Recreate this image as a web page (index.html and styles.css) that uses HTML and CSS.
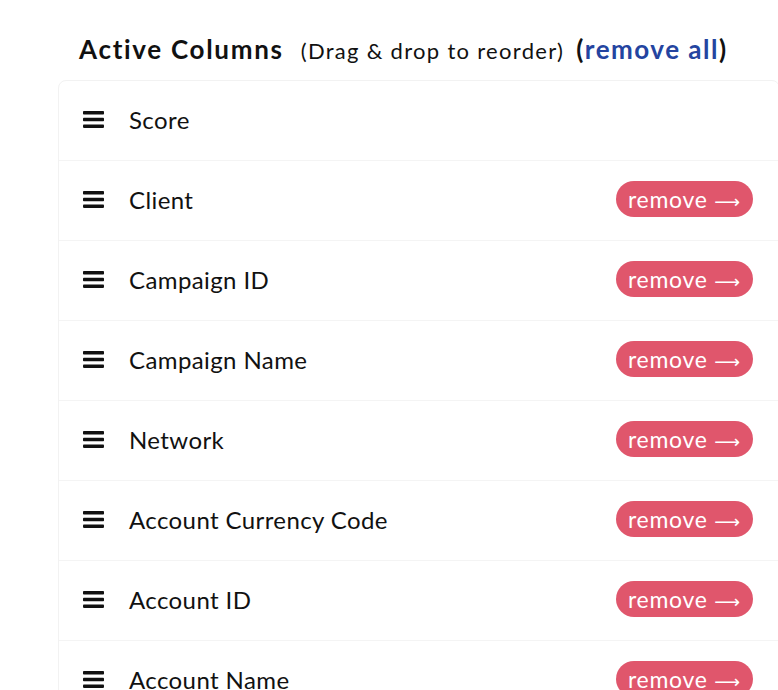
FILE: index.html
```html
<!DOCTYPE html>
<html lang="en">

<head>
    <meta charset="UTF-8">
    <meta name="viewport" content="width=device-width, initial-scale=1.0">
    <title>Active Columns</title>
    <link rel="stylesheet" href="styles.css">
</head>

<body>
    <div class="columns-wrap">
        <h2 class="columns-title">
            Active Columns
            <span class="hint">(Drag &amp; drop to reorder)</span>
            <span class="remove-all">(<a href="#">remove all</a>)</span>
        </h2>
        <ul class="column-list">
            <li class="column-row">
                <svg class="drag" width="21" height="17" viewBox="0 0 21 17"><rect y="0" width="21" height="3.5" rx="0.8"/><rect y="6.7" width="21" height="3.5" rx="0.8"/><rect y="13.4" width="21" height="3.5" rx="0.8"/></svg>
                <span class="name">Score</span>
            </li>
            <li class="column-row">
                <svg class="drag" width="21" height="17" viewBox="0 0 21 17"><rect y="0" width="21" height="3.5" rx="0.8"/><rect y="6.7" width="21" height="3.5" rx="0.8"/><rect y="13.4" width="21" height="3.5" rx="0.8"/></svg>
                <span class="name">Client</span>
                <button class="remove">remove <span class="arrow">&#10230;</span></button>
            </li>
            <li class="column-row">
                <svg class="drag" width="21" height="17" viewBox="0 0 21 17"><rect y="0" width="21" height="3.5" rx="0.8"/><rect y="6.7" width="21" height="3.5" rx="0.8"/><rect y="13.4" width="21" height="3.5" rx="0.8"/></svg>
                <span class="name">Campaign ID</span>
                <button class="remove">remove <span class="arrow">&#10230;</span></button>
            </li>
            <li class="column-row">
                <svg class="drag" width="21" height="17" viewBox="0 0 21 17"><rect y="0" width="21" height="3.5" rx="0.8"/><rect y="6.7" width="21" height="3.5" rx="0.8"/><rect y="13.4" width="21" height="3.5" rx="0.8"/></svg>
                <span class="name">Campaign Name</span>
                <button class="remove">remove <span class="arrow">&#10230;</span></button>
            </li>
            <li class="column-row">
                <svg class="drag" width="21" height="17" viewBox="0 0 21 17"><rect y="0" width="21" height="3.5" rx="0.8"/><rect y="6.7" width="21" height="3.5" rx="0.8"/><rect y="13.4" width="21" height="3.5" rx="0.8"/></svg>
                <span class="name">Network</span>
                <button class="remove">remove <span class="arrow">&#10230;</span></button>
            </li>
            <li class="column-row">
                <svg class="drag" width="21" height="17" viewBox="0 0 21 17"><rect y="0" width="21" height="3.5" rx="0.8"/><rect y="6.7" width="21" height="3.5" rx="0.8"/><rect y="13.4" width="21" height="3.5" rx="0.8"/></svg>
                <span class="name">Account Currency Code</span>
                <button class="remove">remove <span class="arrow">&#10230;</span></button>
            </li>
            <li class="column-row">
                <svg class="drag" width="21" height="17" viewBox="0 0 21 17"><rect y="0" width="21" height="3.5" rx="0.8"/><rect y="6.7" width="21" height="3.5" rx="0.8"/><rect y="13.4" width="21" height="3.5" rx="0.8"/></svg>
                <span class="name">Account ID</span>
                <button class="remove">remove <span class="arrow">&#10230;</span></button>
            </li>
            <li class="column-row">
                <svg class="drag" width="21" height="17" viewBox="0 0 21 17"><rect y="0" width="21" height="3.5" rx="0.8"/><rect y="6.7" width="21" height="3.5" rx="0.8"/><rect y="13.4" width="21" height="3.5" rx="0.8"/></svg>
                <span class="name">Account Name</span>
                <button class="remove">remove <span class="arrow">&#10230;</span></button>
            </li>
        </ul>
    </div>
</body>

</html>
```

FILE: styles.css
```css
body {
    margin: 0;
    padding: 0;
    overflow: hidden;
    background: #fff;
    color: #111;
    font-family: Lato, 'Open Sans', sans-serif;
}

.columns-wrap {
    padding: 30px 0 0 58px;
}

.columns-title {
    margin: 0 0 0 21px;
    height: 50px;
    font-size: 26px;
    font-weight: bold;
    letter-spacing: 1.7px;
    line-height: 39px;
    white-space: nowrap;
}

.hint {
    margin-left: 9px;
    font-size: 22px;
    font-weight: normal;
    letter-spacing: 1.3px;
}

.remove-all {
    margin-left: 4px;
    font-size: 26px;
    letter-spacing: 1.5px;
}

.remove-all a {
    color: #2444a0;
    text-decoration: none;
}

.column-list {
    box-sizing: border-box;
    width: 722px;
    margin: 0;
    padding: 0;
    list-style: none;
    border: 1px solid #f2f2f2;
    border-radius: 8px;
}

.column-row {
    display: flex;
    align-items: center;
    box-sizing: border-box;
    height: 80px;
    padding: 0 26px 3px 24px;
    border-bottom: 1px solid #f4f4f4;
}

.drag {
    flex: none;
    fill: #111;
}

.name {
    flex: 1;
    margin-left: 25px;
    font-size: 24px;
    letter-spacing: 0.4px;
}

.remove {
    height: 36px;
    padding: 0 13px 0 12px;
    border: none;
    border-radius: 18px;
    background: #e0566c;
    color: #fff;
    font-family: Lato, 'Open Sans', sans-serif;
    font-size: 23px;
    letter-spacing: 0.7px;
    line-height: 36px;
}

.arrow {
    font-family: 'DejaVu Sans', sans-serif;
    font-size: 18px;
    letter-spacing: 0;
}
```
